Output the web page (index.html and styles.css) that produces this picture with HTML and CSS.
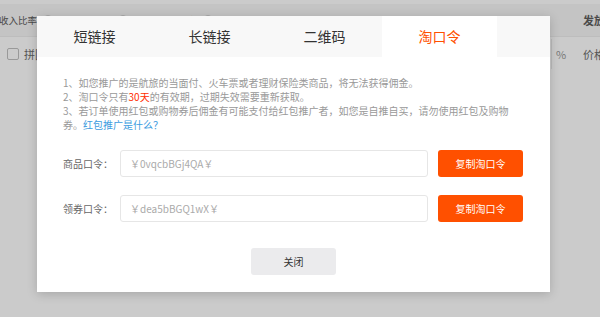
FILE: index.html
```html
<!DOCTYPE html>
<html lang="zh-CN">
<head>
    <meta charset="UTF-8">
    <meta name="viewport" content="width=device-width, initial-scale=1.0">
    <title>淘口令</title>
    <link rel="stylesheet" href="styles.css">
</head>
<body>
    <div class="page">
        <div class="thead">
            <div class="th th-rate">收入比率 <span class="qa">?</span></div>
            <div class="th">月推广量 <span class="qa">?</span></div>
            <div class="th">月支出佣金 <span class="qa">?</span></div>
            <div class="th th-right">发放</div>
        </div>
        <div class="trow">
            <label class="cell-check"><span class="check"></span>拼团</label>
            <div class="cell-rate">%</div>
            <div class="cell-price">价格</div>
        </div>

        <div class="dialog">
            <div class="tabs">
                <div class="tab">短链接</div>
                <div class="tab">长链接</div>
                <div class="tab">二维码</div>
                <div class="tab active">淘口令</div>
            </div>
            <div class="dialog-body">
                <div class="tips">
                    <p>1、如您推广的是航旅的当面付、火车票或者理财保险类商品，将无法获得佣金。</p>
                    <p>2、淘口令只有<em>30天</em>的有效期，过期失效需要重新获取。</p>
                    <p>3、若订单使用红包或购物券后佣金有可能支付给红包推广者，如您是自推自买，请勿使用红包及购物券。<a href="#">红包推广是什么？</a></p>
                </div>
                <div class="form-row">
                    <label for="goods">商品口令：</label>
                    <input type="text" id="goods" value="￥0vqcbBGj4QA￥" readonly>
                    <button type="button" class="btn-copy">复制淘口令</button>
                </div>
                <div class="form-row">
                    <label for="coupon">领券口令：</label>
                    <input type="text" id="coupon" value="￥dea5bBGQ1wX￥" readonly>
                    <button type="button" class="btn-copy">复制淘口令</button>
                </div>
                <div class="actions">
                    <button type="button" class="btn-close">关闭</button>
                </div>
            </div>
        </div>
    </div>
</body>
</html>
```

FILE: styles.css
```css
html, body {
    margin: 0;
    padding: 0;
    height: 100%;
    overflow: hidden;
}
body {
    font-family: "Noto Sans CJK SC", "Liberation Sans", sans-serif;
    background-color: #cbcbcb;
    color: #333;
}
.page {
    position: relative;
    height: 100%;
    padding-top: 4px;
    box-sizing: border-box;
}

/* table behind the overlay */
.thead {
    display: flex;
    align-items: center;
    height: 32px;
    background-color: #c4c4c4;
    border-bottom: 1px solid #bdbdbd;
    font-size: 9.5px;
    color: #4a4a4a;
    white-space: nowrap;
}
.th {
    width: 75px;
    flex-shrink: 0;
}
.th-rate {
    margin-left: -1px;
}
.th-right {
    margin-left: auto;
    width: 17px;
    overflow: hidden;
    font-size: 11px;
    font-weight: bold;
}
.qa {
    display: inline-block;
    width: 8px;
    height: 8px;
    line-height: 8px;
    border: 1px solid #a9a9a9;
    border-radius: 50%;
    font-size: 7px;
    text-align: center;
    color: #a9a9a9;
    vertical-align: 1px;
    margin-left: 4px;
}
.trow {
    display: flex;
    align-items: center;
    height: 34px;
    font-size: 11px;
    color: #555;
    white-space: nowrap;
}
.cell-check {
    display: flex;
    align-items: center;
    padding-left: 7px;
}
.check {
    width: 10px;
    height: 10px;
    border: 1px solid #999;
    border-radius: 2px;
    margin-right: 5px;
}
.cell-rate {
    margin-left: auto;
    height: 30px;
    line-height: 30px;
    border-left: 1px solid #bbb;
    padding-left: 4px;
    width: 27px;
    color: #777;
}
.cell-price {
    width: 17px;
    overflow: hidden;
}

/* dialog */
.dialog {
    position: absolute;
    left: 37px;
    top: 16px;
    width: 513px;
    height: 276px;
    background-color: #fff;
    box-shadow: 0 2px 10px rgba(0, 0, 0, 0.18);
}
.tabs {
    display: flex;
    height: 41px;
    background-color: #f8f8f8;
}
.tab {
    width: 115px;
    line-height: 41px;
    text-align: center;
    font-size: 14px;
    color: #333;
}
.tab.active {
    background-color: #fff;
    color: #ff5000;
}
.dialog-body {
    padding: 19px 26px 0;
}
.tips {
    font-size: 10px;
    line-height: 14px;
    color: #999;
}
.tips p {
    margin: 0;
}
.tips em {
    font-style: normal;
    color: #ff2d00;
}
.tips a {
    color: #3d9ce0;
    text-decoration: none;
}
.form-row {
    display: flex;
    align-items: center;
    margin-top: 18px;
}
.form-row label {
    width: 57px;
    font-size: 10px;
    color: #666;
}
.form-row input {
    width: 308px;
    height: 27px;
    box-sizing: border-box;
    border: 1px solid #e6e6e6;
    border-radius: 3px;
    padding: 0 9px;
    font-family: inherit;
    font-size: 10px;
    color: #aaa;
    outline: none;
}
.btn-copy {
    width: 85px;
    height: 27px;
    margin-left: 10px;
    border: none;
    border-radius: 3px;
    background-color: #ff5000;
    color: #fff;
    font-family: inherit;
    font-size: 10px;
    padding: 0;
}
.actions {
    display: flex;
    justify-content: center;
    margin-top: 26px;
}
.btn-close {
    width: 85px;
    height: 27px;
    border: none;
    border-radius: 3px;
    background-color: #ebebed;
    color: #333;
    font-family: inherit;
    font-size: 10px;
    padding: 0;
}
```
